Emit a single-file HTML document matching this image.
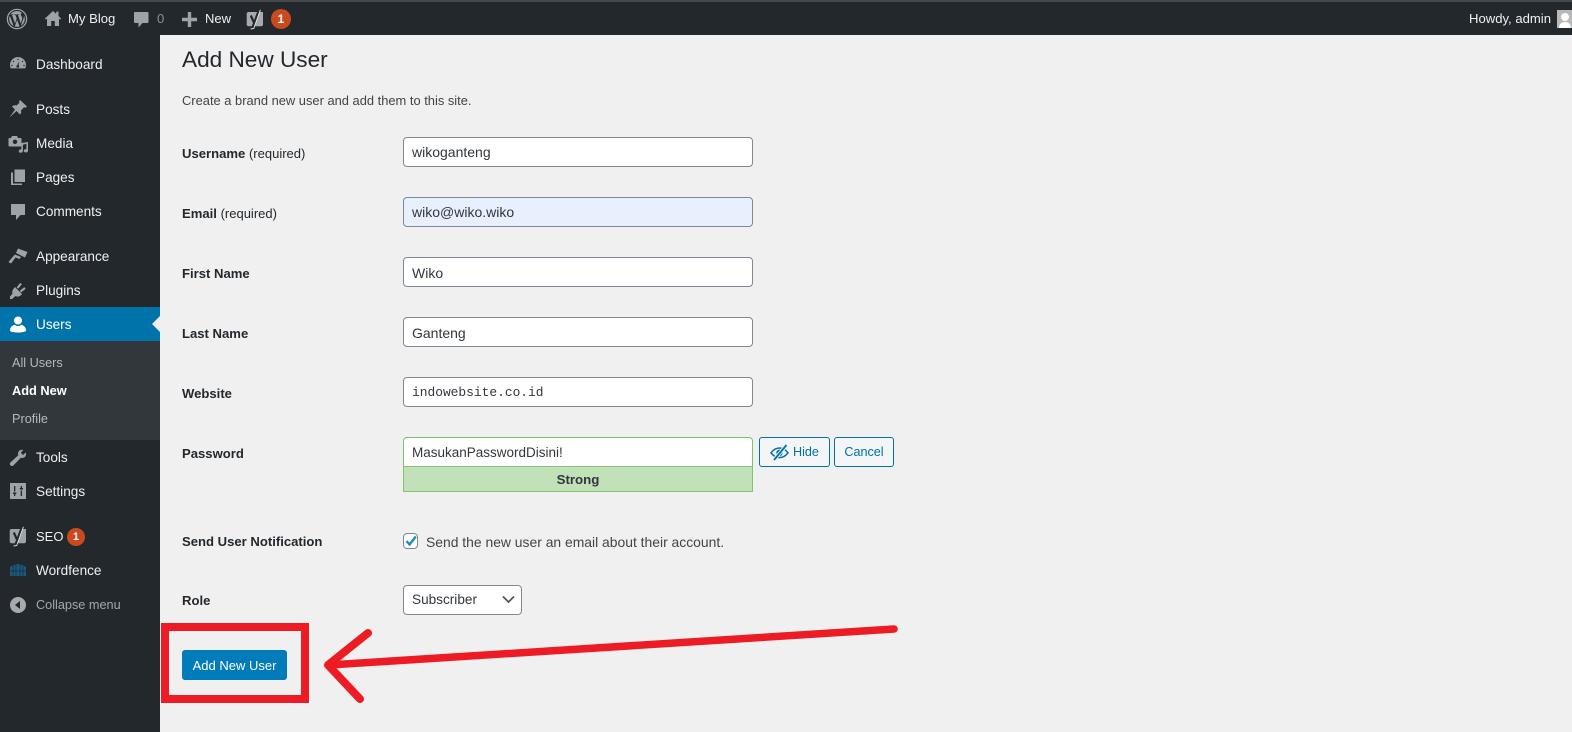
<!DOCTYPE html>
<html lang="en"><head><meta charset="utf-8"><title>Add New User</title>
<style>
html,body{margin:0;padding:0;width:1572px;height:732px;overflow:hidden;background:#f0f0f0;font-family:"Liberation Sans",sans-serif;color:#1d2327}
.a{position:absolute}
.t{position:absolute;white-space:nowrap;line-height:20px;font-size:13.5px}
#bar{left:0;top:0;width:1572px;height:35px;background:#23282d;border-top:2px solid #46494c;box-sizing:border-box}
#side{left:0;top:35px;width:160px;height:697px;background:#23282d}
.m{color:#eef0f2;font-size:13.6px}
.i{position:absolute;fill:#9ea3a8}
.l{font-weight:bold;font-size:13.1px;color:#23282d;left:182px}
.l span{font-weight:normal;font-size:13px}
.f{position:absolute;left:403px;width:350px;height:30px;box-sizing:border-box;background:#fff;border:1px solid #7e8993;border-radius:4px;color:#32373c;font-size:14px;line-height:29px;padding-left:8px;white-space:nowrap}
.b{position:absolute;top:437px;height:30px;box-sizing:border-box;background:#f3f5f6;border:1px solid #0071a1;border-radius:3px;color:#0071a1;font-size:12.6px;line-height:28px;white-space:nowrap}
.badge{position:absolute;border-radius:50%;background:#ca4a1f;color:#fff;text-align:center;font-weight:bold}
</style></head><body>
<div class="a" id="bar"></div>
<div class="a" id="side"></div>

<!-- admin bar -->
<svg class="i" style="left:6px;top:8px" width="22" height="22" viewBox="0 0 22 22"><circle cx="11" cy="11" r="9.6" fill="none" stroke="#9ea3a8" stroke-width="1.3"/><path d="M3.2 11c0 3.1 1.8 5.8 4.4 7L3.9 7.8A7.8 7.8 0 0 0 3.200 11zM16.300 10.600c0-1-.4-1.700-.7-2.200-.4-.7-.8-1.200-.8-1.900 0-.7.5-1.400 1.300-1.400h.1A7.800 7.800 0 0 0 4.400 6.500h.5c.8 0 2.100-.1 2.100-.1.400 0 .5.600 0 .6 0 0-.4 0-.9.100l2.900 8.500 1.700-5.100-1.200-3.400c-.4 0-.8-.1-.8-.1-.4 0-.4-.6 0-.6 0 0 1.300.1 2.100.1.800 0 2.100-.1 2.100-.1.400 0 .5.600 0 .6 0 0-.4 0-.9.100l2.800 8.500.8-2.700c.4-1 .6-1.800.6-2.400zM11.100 11.700l-2.300 6.800a7.800 7.800 0 0 0 4.800-.1l-.1-.1zM17.800 7.300c0 .3.100.6.100.9 0 .8-.1 1.600-.6 2.800l-2.400 6.800a7.800 7.800 0 0 0 2.900-10.500z"/></svg>
<svg class="i" style="left:44px;top:9px" width="18" height="19" viewBox="0 0 18 19"><path d="M9 2 0.800 9.600l1 1L3 9.600V17h4.200v-5h3.600v5H15V9.600l1.200 1 1-1L14.500 7V2.600h-2.300v2.300z"/></svg>
<div class="t" style="left:68px;top:9px;color:#eef0f2;font-size:13.1px">My Blog</div>
<svg class="i" style="left:133px;top:11px" width="17" height="18" viewBox="0 0 17 18"><path d="M2 1h12.500c.6 0 1 .4 1 1v9c0 .6-.4 1-1 1H9.500L5.500 16.500V12H2c-.6 0-1-.4-1-1V2c0-.6.400-1 1-1z"/></svg>
<div class="t" style="left:157px;top:9px;color:#8d9296;font-size:13px">0</div>
<svg class="i" style="left:182px;top:12px" width="15" height="15" viewBox="0 0 15 15"><path d="M5.800 0h3.400v5.800H15v3.400H9.200V15H5.800V9.200H0V5.800h5.800z"/></svg>
<div class="t" style="left:205px;top:9px;color:#eef0f2;font-size:13px">New</div>
<svg style="position:absolute;left:246px;top:9px" width="19" height="21" viewBox="0 0 19 21"><path d="M2.500 3H17v12.500c0 1-.8 1.800-1.800 1.800H2.500c-1 0-1.800-.8-1.800-1.800V4.800C.7 3.800 1.500 3 2.500 3z" fill="#a7abaf"/><path d="M4.800 6.500 8.400 14.500" fill="none" stroke="#23282d" stroke-width="2.200"/><path d="M13 .8 8 14.500 6.500 18.500 4.200 19" fill="none" stroke="#23282d" stroke-width="2.200"/><path d="M14.400 .8 9.500 14.500 7.800 19.500 4.600 20" fill="none" stroke="#e8e9ea" stroke-width=".9"/></svg>
<div class="badge" style="left:271px;top:9px;width:20px;height:20px;line-height:20px;font-size:12px">1</div>
<div class="t" style="left:1469px;top:9px;color:#eef0f2;font-size:13.1px">Howdy, admin</div>
<svg style="position:absolute;left:1557px;top:10px" width="15" height="18" viewBox="0 0 15 18"><rect width="15" height="18" fill="#b9b9b9"/><circle cx="8" cy="7" r="4" fill="#fff"/><path d="M2 18c0-4 2.500-6 6-6s6 2 6 6z" fill="#fff"/></svg>

<!-- sidebar active/sub -->
<div class="a" style="left:0;top:307px;width:160px;height:34px;background:#0073aa"></div>
<div class="a" style="left:152px;top:316px;width:0;height:0;border-top:8px solid transparent;border-bottom:8px solid transparent;border-right:8px solid #f0f0f0"></div>
<div class="a" style="left:0;top:341px;width:160px;height:99px;background:#32373c"></div>

<!-- sidebar icons -->
<svg class="i" style="left:9px;top:56px" width="18" height="16" viewBox="0 0 18 16"><path d="M9 1a8 8 0 0 0-8 8c0 1.200.3 2.400.8 3.400h14.400c.5-1 .8-2.200.8-3.400a8 8 0 0 0-8-8z"/><g fill="#23282d"><circle cx="9" cy="3.400" r=".7"/><circle cx="4.500" cy="5.400" r=".7"/><circle cx="13.500" cy="5.400" r=".7"/><circle cx="3" cy="9.500" r=".7"/><circle cx="15" cy="9.500" r=".7"/><path d="M10.400 5 9.600 9.300a1.400 1.400 0 1 1-1.300-.2z"/></g></svg>
<svg class="i" style="left:9px;top:100px" width="18" height="18" viewBox="0 0 18 18"><path d="M11 0 18 6.500 16.500 7.800 15 7.200 12 10.500C12.500 12.500 12 13.500 11 14.500L7.500 11 .5 17.500 6 9.500 3 6.500C4 5.500 5.500 5 7.500 5.500L10.500 2.800 10 1.300z"/></svg>
<svg class="i" style="left:8px;top:135px" width="20" height="18" viewBox="0 0 20 18"><path d="M4 1h5l1 2h2.500c.5 0 1 .4 1 1v6.500c0 .5-.5 1-1 1H1.500c-.5 0-1-.5-1-1V4c0-.6.500-1 1-1H3z"/><circle cx="7" cy="6.800" r="2.200" fill="#23282d"/><path d="M20 7v8.500c0 1.200-1 2-2.200 2s-2-.8-2-1.700c0-1 1-1.700 2.200-1.700l.4.100V8.800l-3.500.9v6.300c0 1.100-1 1.800-2.100 1.800-1.200 0-2-.7-2-1.700 0-.9.900-1.700 2-1.700l.5.100V8z"/></svg>
<svg class="i" style="left:10px;top:169px" width="16" height="18" viewBox="0 0 16 18"><path d="M4.500 0.500H15V13H4.500z"/><path d="M3 3.500v11h9V16H1V3.500z"/></svg>
<svg class="i" style="left:10px;top:203px" width="16" height="18" viewBox="0 0 16 18"><path d="M1.500 1h13c.3 0 .5.200.5.500v10c0 .3-.2.500-.5.500H10.500L6 17v-5H1.500c-.3 0-.5-.2-.5-.5v-10c0-.3.200-.5.500-.5z"/></svg>
<svg class="i" style="left:8px;top:248px" width="20" height="16" viewBox="0 0 20 16"><path d="M10 .5 19.500 4 17 9.500 8 5zM7 6.500 13 9 11.500 11 7.500 9.500 3 15.500 .5 14 5 8.500z"/></svg>
<svg class="i" style="left:9px;top:282px" width="18" height="18" viewBox="0 0 18 18"><path d="M6 5 13 12C11 15 8 15 6.500 14L3 17H1V14.500L3.500 11.500C3 10 3 8 6 5z"/><path d="M8.500 6 12 1.500M11.500 9.500 16 6" fill="none" stroke="#9ea3a8" stroke-width="2.200"/></svg>
<svg class="i" style="left:10px;top:316px;fill:#fff" width="16" height="17" viewBox="0 0 16 17"><circle cx="8" cy="4.500" r="4"/><path d="M0 14.500c0-3.500 2.500-5.300 4.800-5.800C5.600 9.500 6.700 10 8 10s2.400-.5 3.200-1.300c2.300.5 4.800 2.300 4.800 5.800 0 1.200-3.500 2-8 2s-8-.8-8-2z"/></svg>
<svg class="i" style="left:9px;top:449px" width="18" height="18" viewBox="0 0 18 18"><path d="M13 .8c-2.300 0-4 1.800-4 4 0 .5.100 1 .3 1.400L1.500 13.400c-.9.900-.9 2.200 0 3 .8.800 2.100.8 3 0L11.800 8.700c.4.200.8.300 1.300.3 2.200 0 4-1.800 4-4 0-.6-.1-1.100-.3-1.500L14 6 11.800 3.800 14.300 1c-.4-.1-.8-.2-1.300-.2z"/></svg>
<svg class="i" style="left:10px;top:483px" width="16" height="16" viewBox="0 0 16 16"><path d="M0 0h16v16H0z"/><path d="M4 3h1.300v5.500H4zM3 9.500h3.300v1.500H5.300v2H4v-2H3zM10.700 3H12v2h1v1.500H9.800V5h.9zM10.700 7.500H12V13h-1.300z" fill="#23282d"/></svg>
<svg style="position:absolute;left:9px;top:526px" width="19" height="21" viewBox="0 0 19 21"><path d="M2.500 3H17v12.500c0 1-.8 1.800-1.800 1.800H2.500c-1 0-1.800-.8-1.800-1.800V4.800C.7 3.800 1.500 3 2.500 3z" fill="#9ea3a8"/><path d="M4.800 6.500 8.400 14.500" fill="none" stroke="#23282d" stroke-width="2.200"/><path d="M13 .8 8 14.500 6.500 18.500 4.200 19" fill="none" stroke="#23282d" stroke-width="2.200"/><path d="M14.400 .8 9.500 14.500 7.800 19.500 4.600 20" fill="none" stroke="#dfe1e2" stroke-width=".9"/></svg>
<svg style="position:absolute;left:10px;top:564px" width="16" height="12" viewBox="0 0 16 12"><path d="M0 3 3 1.500 8 0l5 1.500L16 3v9H0z" fill="#145c85"/><path d="M3 2v10M6 1v11M10 1v11M13 2v10M0 7h16" stroke="#23282d" stroke-width=".8" fill="none"/></svg>
<svg style="position:absolute;left:10px;top:597px" width="16" height="16" viewBox="0 0 16 16"><circle cx="8" cy="8" r="8" fill="#a7aaad"/><path d="M10 4v8L5 8z" fill="#23282d"/></svg>

<!-- sidebar text -->
<div class="t m" style="left:36px;top:55px">Dashboard</div>
<div class="t m" style="left:36px;top:100px">Posts</div>
<div class="t m" style="left:36px;top:134px">Media</div>
<div class="t m" style="left:36px;top:168px">Pages</div>
<div class="t m" style="left:36px;top:202px">Comments</div>
<div class="t m" style="left:36px;top:247px">Appearance</div>
<div class="t m" style="left:36px;top:281px">Plugins</div>
<div class="t m" style="left:36px;top:315px;color:#fff">Users</div>
<div class="t" style="left:12px;top:353px;font-size:12.7px;color:#b4b9be">All Users</div>
<div class="t" style="left:12px;top:381px;font-size:12.8px;color:#fff;font-weight:bold">Add New</div>
<div class="t" style="left:12px;top:409px;font-size:12.7px;color:#b4b9be">Profile</div>
<div class="t m" style="left:36px;top:448px">Tools</div>
<div class="t m" style="left:36px;top:482px">Settings</div>
<div class="t m" style="left:36px;top:527px;font-size:13px">SEO</div>
<div class="badge" style="left:67px;top:528px;width:18px;height:18px;line-height:18px;font-size:11px">1</div>
<div class="t m" style="left:36px;top:561px">Wordfence</div>
<div class="t" style="left:36px;top:595px;font-size:12.7px;color:#a4a8ac">Collapse menu</div>

<!-- content -->
<div class="t" style="left:182px;top:45px;font-size:22.6px;line-height:30px;color:#23282d">Add New User</div>
<div class="t" style="left:182px;top:91px;font-size:12.9px;color:#444">Create a brand new user and add them to this site.</div>

<div class="t l" style="top:144px">Username <span>(required)</span></div>
<div class="t l" style="top:204px">Email <span>(required)</span></div>
<div class="t l" style="top:264px">First Name</div>
<div class="t l" style="top:324px">Last Name</div>
<div class="t l" style="top:384px">Website</div>
<div class="t l" style="top:444px">Password</div>
<div class="t l" style="top:532px">Send User Notification</div>
<div class="t l" style="top:591px">Role</div>

<div class="f" style="top:137px">wikoganteng</div>
<div class="f" style="top:197px;background:#e8f0fe">wiko@wiko.wiko</div>
<div class="f" style="top:257px;line-height:30px">Wiko</div>
<div class="f" style="top:317px;line-height:30px">Ganteng</div>
<div class="f" style="top:377px;font-family:'Liberation Mono',monospace;font-size:12.9px">indowebsite.co.id</div>
<div class="f" style="top:437px;height:30px;border-color:#7ac26d;border-radius:4px 4px 0 0;font-size:13.5px">MasukanPasswordDisini!</div>
<div class="a" style="left:403px;top:466px;width:350px;height:26px;box-sizing:border-box;background:#c1e1b9;border:1px solid #83c373;text-align:center;font-weight:bold;font-size:13.3px;line-height:25px;color:#32373c">Strong</div>

<div class="b" style="left:759px;width:71px;padding-left:33px">Hide</div>
<svg style="position:absolute;left:770px;top:443px" width="19" height="19" viewBox="0 0 19 19"><path d="M1 9.800C3.500 6.500 6.300 5 9.500 5s6 1.500 8.500 4.800c-2.500 3.300-5.300 4.800-8.500 4.800S3.500 13.100 1 9.800z" fill="none" stroke="#0071a1" stroke-width="1.600"/><circle cx="9.500" cy="9.800" r="3.200" fill="#0071a1"/><path d="M16.500 2 4 17" stroke="#f3f5f6" stroke-width="3.600"/><path d="M16.500 2 4 17" stroke="#0071a1" stroke-width="1.800"/></svg>
<div class="b" style="left:834px;width:60px;text-align:center">Cancel</div>

<div class="a" style="left:403px;top:533px;width:15px;height:16px;box-sizing:border-box;background:#fff;border:1px solid #7e8993;border-radius:4px"></div>
<svg style="position:absolute;left:403px;top:533px" width="16" height="16" viewBox="0 0 16 16"><path d="M3.500 8 6.600 11.500 12.800 3.500" fill="none" stroke="#1e8cbe" stroke-width="2.400"/></svg>
<div class="t" style="left:426px;top:532px;font-size:13.9px;color:#444">Send the new user an email about their account.</div>

<div class="f" style="top:585px;width:119px;height:30px;line-height:28px;font-size:13.6px">Subscriber</div>
<svg style="position:absolute;left:502px;top:595px" width="13" height="9" viewBox="0 0 13 9"><path d="M1 1.500 6.500 7 12 1.500" fill="none" stroke="#50575e" stroke-width="1.800"/></svg>

<div class="a" style="left:182px;top:650px;width:105px;height:30px;background:#007cba;border-radius:3px;color:#fff;font-size:13px;line-height:32px;text-align:center">Add New User</div>

<!-- annotation -->
<svg style="position:absolute;left:0;top:0;pointer-events:none" width="1572" height="732" viewBox="0 0 1572 732">
<rect x="165" y="627" width="140" height="72" fill="none" stroke="#ed1c24" stroke-width="8"/>
<path d="M894 629 329 665" stroke="#ed1c24" stroke-width="7.500" stroke-linecap="round" fill="none"/>
<path d="M368 633 328 665 360 699" stroke="#ed1c24" stroke-width="8" stroke-linecap="round" stroke-linejoin="round" fill="none"/>
</svg>
</body></html>
